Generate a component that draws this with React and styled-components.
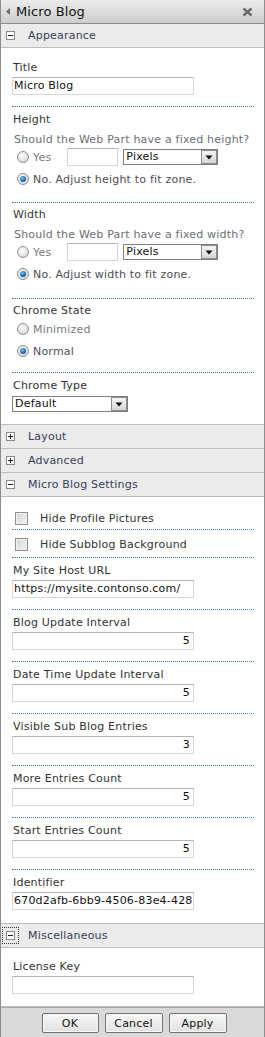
import React from "react";
import styled, { createGlobalStyle, css } from "styled-components";

const Global = createGlobalStyle`
  html, body { margin: 0; padding: 0; background: #ffffff; }
  body { font-family: "DejaVu Sans", Verdana, sans-serif; font-size: 11px; color: #333; letter-spacing: 0.2px; }
  * { box-sizing: border-box; }
`;

const Pane = styled.div`
  width: 265px;
  min-height: 1037px;
  border-left: 1px solid #8d8d8d;
  border-right: 1px solid #8d8d8d;
  background: #fff;
  display: flex;
  flex-direction: column;
`;

const TitleBar = styled.div`
  height: 24px;
  flex: none;
  border-bottom: 1px solid #8c8c8c;
  background: linear-gradient(#ececec, #cdcdcd);
  display: flex;
  align-items: center;
  padding: 0 0 0 4px;
`;

const TitleText = styled.span`
  font-size: 13px;
  letter-spacing: 0.1px;
  color: #111;
  margin-left: 4px;
  flex: 1;
`;

const CloseBtn = styled.span`
  width: 22px;
  display: flex;
  justify-content: center;
  margin-right: 6px;
`;

const Header = styled.div`
  height: 24px;
  flex: none;
  border-bottom: 1px solid #bdbdbd;
  background: #ebebeb;
  display: flex;
  align-items: center;
  padding-left: 3px;
  color: #36405a;
`;

const ToggleWrap = styled.span`
  width: 13px;
  height: 13px;
  display: flex;
  align-items: center;
  justify-content: center;
  ${(p) => p.$focus && css`outline: 1px dotted #333; outline-offset: 1px;`}
`;

const ToggleBox = styled.span`
  width: 9px;
  height: 9px;
  border: 1px solid #8a8a8a;
  background: #fff;
  position: relative;
  display: block;
  &::before {
    content: "";
    position: absolute;
    left: 1px;
    top: 3px;
    width: 5px;
    height: 1px;
    background: #222;
  }
  ${(p) => !p.$open && css`
    &::after {
      content: "";
      position: absolute;
      left: 3px;
      top: 1px;
      width: 1px;
      height: 5px;
      background: #222;
    }
  `}
`;

const HeaderText = styled.span`
  margin-left: 11px;
`;

const Body = styled.div`
  flex: none;
  border-bottom: 1px solid #bdbdbd;
  padding: 0 10px ${(p) => p.$pb ?? 11}px 11px;
`;

const Field = styled.div`
  padding: ${(p) => p.$pt ?? 6}px 0 ${(p) => p.$pb ?? 11}px;
  border-top: ${(p) => (p.$first ? "none" : "1px dotted #4a6cc4")};
`;

const Label = styled.div`
  line-height: 14px;
  color: #333;
  padding-left: 1px;
`;

const Question = styled.div`
  line-height: 14px;
  color: #6e6e78;
  margin-top: 6px;
  padding-left: 2px;
`;

const TextBox = styled.div`
  width: ${(p) => p.$w || 182}px;
  height: 18px;
  flex: none;
  margin-top: ${(p) => (p.$inline ? 0 : 2)}px;
  border: 1px solid #d6d6d6;
  border-top-color: #b3b3b3;
  background: #fff;
  color: #111;
  line-height: 16px;
  padding: 0 ${(p) => (p.$right ? 3 : 1)}px;
  text-align: ${(p) => (p.$right ? "right" : "left")};
  white-space: nowrap;
  overflow: hidden;
`;

const OptionRow = styled.div`
  display: flex;
  align-items: center;
  height: ${(p) => p.$h || 14}px;
  margin-top: ${(p) => p.$mt || 0}px;
  padding-left: 5px;
  gap: 4px;
  color: ${(p) => (p.$checked ? "#4d4d55" : "#7a7a84")};
`;

const Radio = styled.span`
  width: 12px;
  height: 12px;
  border-radius: 50%;
  border: 1px solid #8f8f8f;
  background: radial-gradient(circle at 40% 35%, #fefefe, #dcdcdc 70%, #c8c8c8);
  display: inline-flex;
  align-items: center;
  justify-content: center;
  flex: none;
  ${(p) => p.$checked && css`
    &::after {
      content: "";
      width: 6px;
      height: 6px;
      border-radius: 50%;
      background: radial-gradient(circle at 40% 35%, #7fc4f0, #1565b0 60%, #0b3f7a);
    }
  `}
`;

const Gap = styled.span`
  width: ${(p) => p.$w}px;
  flex: none;
`;

const Select = styled.div`
  width: ${(p) => p.$w}px;
  height: 16px;
  border: 1px solid #7e7e7e;
  background: #fff;
  display: flex;
  align-items: center;
  color: #111;
  margin-top: ${(p) => p.$mt || 0}px;
  margin-left: ${(p) => p.$ml || 0}px;
  padding-left: 2px;
  flex: none;
`;

const SelectText = styled.span`
  flex: 1;
  line-height: 14px;
`;

const DropBtn = styled.span`
  width: 16px;
  height: 14px;
  border: 1px solid #8e8e8e;
  background: linear-gradient(#f4f4f4, #d6d6d6);
  display: flex;
  align-items: center;
  justify-content: center;
`;

const CheckRow = styled.div`
  display: flex;
  align-items: center;
  height: 14px;
  padding: ${(p) => p.$pad};
  box-sizing: content-box;
  border-top: ${(p) => (p.$first ? "none" : "1px dotted #4a6cc4")};
`;

const CheckBox = styled.span`
  width: 13px;
  height: 13px;
  border: 1px solid #8e8f8f;
  background: linear-gradient(135deg, #d4d4d4, #f4f4f4);
  box-shadow: inset 0 0 0 1px #f2f2f2;
  margin-left: 3px;
  flex: none;
`;

const CheckLabel = styled.span`
  margin-left: 12px;
  color: #333;
`;

const Footer = styled.div`
  flex: 1;
  border-top: 1px solid #a8a8a8;
  background: #d9d9d9;
  display: flex;
  justify-content: center;
  align-items: flex-start;
  gap: 6px;
  padding: 5px 0 0 3px;
`;

const Button = styled.button`
  width: ${(p) => p.$w}px;
  height: 20px;
  border: 1px solid #6f6f6f;
  border-radius: 2px;
  background: linear-gradient(#f6f6f6, #e2e2e2);
  font-family: "DejaVu Sans", Verdana, sans-serif;
  font-size: 11px;
  letter-spacing: 0.2px;
  color: #111;
  padding: 0;
  box-shadow: inset 0 0 0 1px #fbfbfb;
`;

const Arrow = () => (
  <svg width="7" height="9" viewBox="0 0 7 9">
    <path d="M5 1 L1 4.5 L5 8 Z" fill="#6a6a6a" />
  </svg>
);

const Close = () => (
  <svg width="11" height="10" viewBox="0 0 11 10">
    <path d="M1.5 1.5 L9.5 8.5 M9.5 1.5 L1.5 8.5" stroke="#6a6a6a" strokeWidth="2.4" />
  </svg>
);

const Tri = () => (
  <svg width="8" height="5" viewBox="0 0 8 5">
    <path d="M0.5 0.5 H7.5 L4 4.5 Z" fill="#111" />
  </svg>
);

const Dropdown = ({ w, value, mt, ml }) => (
  <Select $w={w} $mt={mt} $ml={ml}>
    <SelectText>{value}</SelectText>
    <DropBtn><Tri /></DropBtn>
  </Select>
);

const SizeField = ({ label, question, noText, pt, pb }) => (
  <Field $pt={pt} $pb={pb}>
    <Label>{label}</Label>
    <Question>{question}</Question>
    <OptionRow $h={18} $mt={1}>
      <Radio />
      <span>Yes</span>
      <Gap $w={8} />
      <TextBox $w={51} $inline />
      <Dropdown w={95} value="Pixels" ml={1} />
    </OptionRow>
    <OptionRow $checked $mt={6}>
      <Radio $checked />
      <span>{noText}</span>
    </OptionRow>
  </Field>
);

const TextField = ({ label, value, right, pb }) => (
  <Field $pb={pb}>
    <Label>{label}</Label>
    <TextBox $right={right}>{value}</TextBox>
  </Field>
);

const SectionHeader = ({ open, children, focus }) => (
  <Header>
    <ToggleWrap $focus={focus}>
      <ToggleBox $open={open} />
    </ToggleWrap>
    <HeaderText>{children}</HeaderText>
  </Header>
);

export default function App() {
  return (
    <>
      <Global />
      <Pane>
        <TitleBar>
          <Arrow />
          <TitleText>Micro Blog</TitleText>
          <CloseBtn><Close /></CloseBtn>
        </TitleBar>

        <SectionHeader open>Appearance</SectionHeader>
        <Body $pb={12}>
          <Field $first $pt={13}>
            <Label>Title</Label>
            <TextBox>Micro Blog</TextBox>
          </Field>
          <SizeField
            label="Height"
            question="Should the Web Part have a fixed height?"
            noText="No. Adjust height to fit zone."
            pt={6}
            pb={16}
          />
          <SizeField
            label="Width"
            question="Should the Web Part have a fixed width?"
            noText="No. Adjust width to fit zone."
            pt={5}
            pb={17}
          />
          <Field $pt={5} $pb={14}>
            <Label>Chrome State</Label>
            <OptionRow $mt={4}>
              <Radio />
              <span>Minimized</span>
            </OptionRow>
            <OptionRow $checked $mt={8}>
              <Radio $checked />
              <span>Normal</span>
            </OptionRow>
          </Field>
          <Field $pt={6} $pb={0}>
            <Label>Chrome Type</Label>
            <Dropdown w={116} value="Default" mt={3} />
          </Field>
        </Body>

        <SectionHeader>Layout</SectionHeader>
        <SectionHeader>Advanced</SectionHeader>
        <SectionHeader open>Micro Blog Settings</SectionHeader>
        <Body>
          <CheckRow $first $pad="14px 0 4px">
            <CheckBox />
            <CheckLabel>Hide Profile Pictures</CheckLabel>
          </CheckRow>
          <CheckRow $pad="7px 0 6px">
            <CheckBox />
            <CheckLabel>Hide Subblog Background</CheckLabel>
          </CheckRow>
          <TextField label="My Site Host URL" value="https://mysite.contonso.com/" />
          <TextField label="Blog Update Interval" value="5" right />
          <TextField label="Date Time Update Interval" value="5" right />
          <TextField label="Visible Sub Blog Entries" value="3" right />
          <TextField label="More Entries Count" value="5" right />
          <TextField label="Start Entries Count" value="5" right />
          <TextField label="Identifier" value="670d2afb-6bb9-4506-83e4-428" pb={2} />
        </Body>

        <SectionHeader open focus>Miscellaneous</SectionHeader>
        <Body>
          <Field $first $pt={12} $pb={1}>
            <Label>License Key</Label>
            <TextBox />
          </Field>
        </Body>

        <Footer>
          <Button $w={57}>OK</Button>
          <Button $w={58}>Cancel</Button>
          <Button $w={58}>Apply</Button>
        </Footer>
      </Pane>
    </>
  );
}
